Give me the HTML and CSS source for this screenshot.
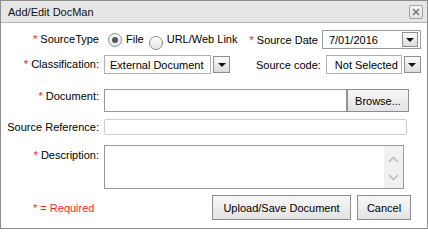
FILE: index.html
```html
<!DOCTYPE html>
<html>
<head>
<meta charset="utf-8">
<link rel="stylesheet" href="styles.css">
</head>
<body>
<div class="dialog">
  <div class="titlebar">
    <span class="title">Add/Edit DocMan</span>
    <span class="close"><svg width="12" height="12" viewBox="0 0 12 12"><path d="M3 3 L9 9 M9 3 L3 9" stroke="#7a7a7a" stroke-width="1.6" fill="none"/></svg></span>
  </div>
  <div class="form">
    <div class="row r1">
      <div class="lbl"><span class="req">*</span> SourceType</div>
      <div class="ctrl">
        <span class="radio"><span class="dot on"></span></span><span class="rtext">File</span>
        <span class="radio r2"><span class="dot"></span></span><span class="rtext">URL/Web Link</span>
        <span class="sublbl sd"><span class="req">*</span> Source Date</span>
        <div class="datebox"><span>7/01/2016</span><span class="ddbtn"><span class="tri"></span></span></div>
      </div>
    </div>
    <div class="row r2">
      <div class="lbl"><span class="req">*</span> Classification:</div>
      <div class="ctrl">
        <div class="selbox cls">External Document</div><span class="ddbtn sep"><span class="tri"></span></span>
        <span class="sublbl sc">Source code:</span>
        <div class="selbox ns">Not Selected</div><span class="ddbtn sep"><span class="tri"></span></span>
      </div>
    </div>
    <div class="row r3">
      <div class="lbl top"><span class="req">*</span> Document:</div>
      <div class="ctrl">
        <div class="docinput"></div><span class="btn browse">Browse...</span>
      </div>
    </div>
    <div class="row r4">
      <div class="lbl">Source Reference:</div>
      <div class="ctrl"><div class="refinput"></div></div>
    </div>
    <div class="row r5">
      <div class="lbl desc"><span class="req">*</span> Description:</div>
      <div class="ctrl">
        <div class="textarea">
          <div class="tafill"></div>
          <div class="scroll"><svg width="19" height="42" viewBox="0 0 19 42"><polyline points="5,16 9.5,11.5 14,16" stroke="#bdbdbd" stroke-width="1.6" fill="none"/><polyline points="5,29 9.5,33.5 14,29" stroke="#bdbdbd" stroke-width="1.6" fill="none"/></svg></div>
        </div>
      </div>
    </div>
    <div class="row r6">
      <div class="required">* = Required</div>
      <div class="actions">
        <span class="btn upload">Upload/Save Document</span>
        <span class="btn cancel">Cancel</span>
      </div>
    </div>
  </div>
</div>
</body>
</html>
```
FILE: styles.css
```css
* { box-sizing: border-box; }
html, body { margin: 0; padding: 0; background: #fff; }
body {
  font-family: "Liberation Sans", Arial, sans-serif;
  font-size: 11px;
  color: #000;
}
.dialog {
  width: 428px;
  height: 229px;
  border: 1px solid #8e8e8e;
  display: flex;
  flex-direction: column;
  background: #fff;
}
.titlebar {
  height: 22px;
  flex: none;
  background: #e6e6e6;
  border-bottom: 1px solid #b4b4b4;
  display: flex;
  align-items: center;
  justify-content: space-between;
  padding: 0 4px 0 7px;
}
.title { color: #111; }
.close {
  width: 14px;
  height: 14px;
  margin-top: 1px;
  border: 1px solid #a2a2a2;
  border-radius: 2px;
  background: linear-gradient(#f4f4f4, #e2e2e2);
  display: flex;
  align-items: center;
  justify-content: center;
}
.form { padding-top: 6px; display: flex; flex-direction: column; }
.row {
  display: grid;
  grid-template-columns: 99px 1fr;
  column-gap: 4px;
  align-items: center;
}
.lbl { text-align: right; padding-right: 1px; line-height: 13px; white-space: nowrap; }
.lbl.top { align-self: start; padding-top: 1px; }
.lbl.desc { align-self: start; padding-top: 4px; }
.req { color: #ee1c1c; }
.ctrl { display: flex; align-items: center; }

.r1 { height: 19px; }
.r2 { height: 19px; margin-top: 7px; }
.r3 { height: 23px; margin-top: 15px; }
.r4 { height: 16px; margin-top: 7px; }
.r5 { height: 44px; margin-top: 10px; }
.r6 { height: 25px; margin-top: 6px; }

.radio {
  width: 14px;
  height: 14px;
  border-radius: 50%;
  border: 1px solid #8d8d8d;
  background: linear-gradient(#fdfdfd, #e4e4e4);
  display: flex;
  align-items: center;
  justify-content: center;
  margin-left: 4px;
  flex: none;
}
.radio.r2 { margin-left: 5px; }
.dot { width: 6px; height: 6px; border-radius: 50%; background: transparent; }
.dot.on { background: #555; }
.rtext { margin-left: 4px; line-height: 13px; }
.sublbl { white-space: nowrap; }
.sd { margin-left: 12px; }
.sc { margin-left: 26px; }

.datebox {
  margin-left: 4px;
  width: 99px;
  height: 19px;
  border: 1px solid #9a9a9a;
  display: flex;
  align-items: center;
  justify-content: space-between;
  padding-left: 6px;
  padding-right: 2px;
}
.ddbtn {
  width: 16px;
  height: 15px;
  border: 1px solid #8f8f8f;
  background: linear-gradient(#fafafa, #dcdcdc);
  display: flex;
  align-items: center;
  justify-content: center;
  flex: none;
}
.ddbtn.sep { margin-left: 2px; width: 17px; height: 17px; }
.tri {
  width: 0; height: 0;
  border-left: 4px solid transparent;
  border-right: 4px solid transparent;
  border-top: 4px solid #111;
  margin-top: 1px;
}
.selbox {
  height: 19px;
  border: 1px solid #b0b0b0;
  display: flex;
  align-items: center;
  white-space: nowrap;
}
.selbox.cls { width: 107px; padding-left: 5px; }
.selbox.ns { width: 76px; margin-left: 5px; padding-left: 8px; }

.docinput {
  width: 243px;
  height: 23px;
  border: 1px solid #9a9a9a;
}
.btn {
  display: flex;
  align-items: center;
  justify-content: center;
  border: 1px solid #8c8c8c;
  background: linear-gradient(#f7f7f7, #e3e3e3);
  white-space: nowrap;
  color: #000;
}
.browse { width: 62px; height: 23px; margin-left: 0; }
.refinput {
  width: 303px;
  height: 16px;
  border: 1px solid #cfcfcf;
  border-radius: 2px;
}
.textarea {
  width: 300px;
  height: 44px;
  border: 1px solid #9a9a9a;
  display: flex;
}
.tafill { flex: 1; }
.scroll { width: 19px; background: #f1f1f1; display: flex; }

.r6 { display: flex; align-items: center; justify-content: space-between; }
.required { color: #ff1f1f; margin-left: 32px; font-size: 11px; }
.actions { display: flex; gap: 6px; margin-right: 16px; }
.upload { height: 25px; padding: 0 11px; width: 139px; }
.cancel { height: 25px; width: 54px; }
```
